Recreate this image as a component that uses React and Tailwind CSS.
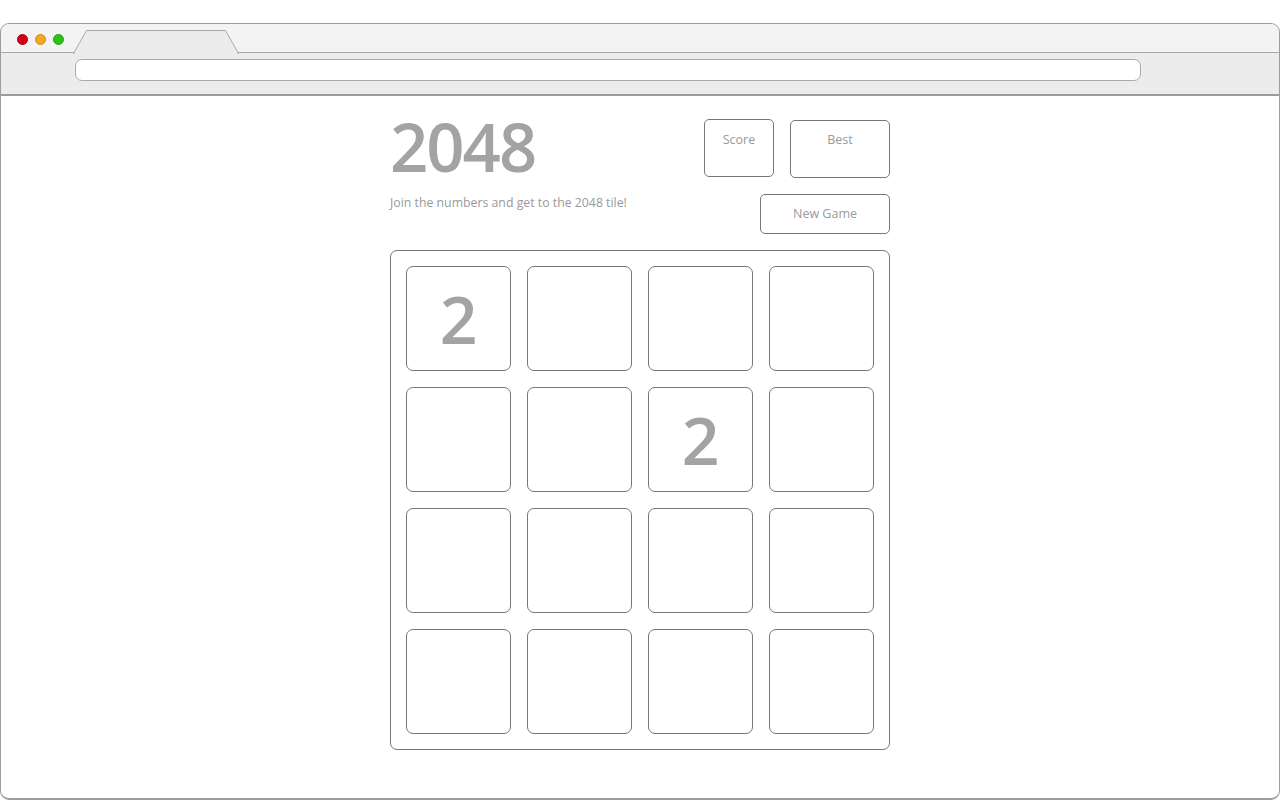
import React from 'react';

const board = [
  [2, null, null, null],
  [null, null, 2, null],
  [null, null, null, null],
  [null, null, null, null],
];

const Tile = ({ value }) => (
  <div className="w-[105px] h-[105px] rounded-[7px] border border-[#777] flex items-center justify-center">
    {value && (
      <span className="text-[66px] font-semibold leading-none text-[#a3a3a3] pb-[2px]">{value}</span>
    )}
  </div>
);

const BrowserChrome = () => (
  <div className="relative">
    <div className="h-[29px] bg-[#f3f3f3] border-b border-[#a8a8a8] rounded-t-[9px] relative">
      <div className="absolute left-[16px] top-[10px] flex gap-[7px]">
        <span className="w-[11px] h-[11px] rounded-full bg-[#d0011b] border border-[#a00]" />
        <span className="w-[11px] h-[11px] rounded-full bg-[#f5a623] border border-[#d18a12]" />
        <span className="w-[11px] h-[11px] rounded-full bg-[#30c01a] border border-[#2a9a18]" />
      </div>
      <svg className="absolute left-[72px] top-[6px]" width="168" height="24" viewBox="0 0 168 24">
        <path d="M0.5 23.5 L13.5 0.5 L152.5 0.5 L165.5 23.5 Z" fill="#ececec" stroke="#a8a8a8" />
        <rect x="1.5" y="23" width="163" height="2" fill="#ececec" />
      </svg>
    </div>
    <div className="h-[43px] bg-[#ececec] border-b-2 border-[#9c9c9c] pl-[74px] pr-[138px] pt-[6px]">
      <div className="h-[22px] bg-white border border-[#aaa] rounded-[7px]" />
    </div>
  </div>
);

export default function App() {
  return (
    <div className="w-[1280px] h-[800px] bg-white pt-[23px] overflow-hidden" style={{ fontFamily: '"Open Sans", sans-serif' }}>
      <div className="h-[777px] border border-[#9c9c9c] rounded-t-[9px] rounded-b-[9px] border-b-2">
        <BrowserChrome />
        <div className="w-[500px] mx-auto pt-[23px]">
          <div className="flex justify-between">
            <div>
              <h1 className="text-[67px] font-semibold leading-none text-[#a3a3a3] tracking-[-2px] -mt-[6px]">2048</h1>
              <p className="text-[12.3px] text-[#999] mt-[14px]">Join the numbers and get to the 2048 tile!</p>
            </div>
            <div className="flex flex-col items-end">
              <div className="flex gap-[16px] items-start">
                <div className="w-[70px] h-[58px] rounded-[5px] border border-[#777] text-center text-[12.5px] text-[#999] pt-[11px]">Score</div>
                <div className="w-[100px] h-[58px] rounded-[5px] border border-[#777] text-center text-[12.5px] text-[#999] pt-[10px] mt-[1px]">Best</div>
              </div>
              <button className="mt-[16px] w-[130px] h-[40px] rounded-[5px] border border-[#777] text-[12.5px] text-[#999] pt-[1px]">New Game</button>
            </div>
          </div>
          <div className="mt-[16px] w-[500px] h-[500px] rounded-[7px] border border-[#777] p-[15px] grid grid-cols-4 gap-[16px]">
            {board.flat().map((v, i) => (
              <Tile key={i} value={v} />
            ))}
          </div>
        </div>
      </div>
    </div>
  );
}
